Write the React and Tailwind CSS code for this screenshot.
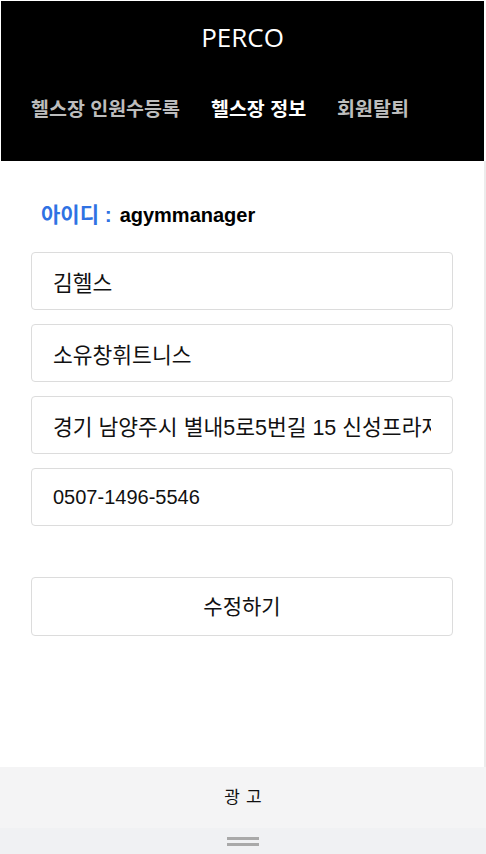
import { useState } from "react";

const font = { fontFamily: '"Liberation Sans", "Noto Sans CJK KR", sans-serif' };

export default function App() {
  const [name, setName] = useState("김헬스");
  const [gym, setGym] = useState("소유창휘트니스");
  const [addr, setAddr] = useState("경기 남양주시 별내5로5번길 15 신성프라자");
  const [tel, setTel] = useState("0507-1496-5546");

  const tabs = ["헬스장 인원수등록", "헬스장 정보", "회원탈퇴"];
  const active = 1;

  const fields = [
    [name, setName, "text-[21.5px]"],
    [gym, setGym, "text-[21.5px]"],
    [addr, setAddr, "text-[21.5px]"],
    [tel, setTel, "text-[20px]"],
  ];

  return (
    <div
      className="h-[854px] w-[486px] flex flex-col bg-white overflow-hidden"
      style={font}
    >
      <header className="h-[160px] mt-[1px] ml-[1px] mr-[2px] bg-black flex flex-col items-center">
        <h1
          className="mt-[18px] text-[26px] leading-[36px] text-white font-normal"
          style={{ fontFamily: '"Open Sans", sans-serif' }}
        >
          PERCO
        </h1>
        <nav className="mt-[41px] self-start pl-[30px] flex gap-[31px]">
          {tabs.map((t, i) => (
            <button
              key={t}
              className={`text-[19.5px] leading-[26px] font-bold ${
                i === active ? "text-white" : "text-[#bdbdbd]"
              }`}
            >
              {t}
            </button>
          ))}
        </nav>
      </header>

      <main className="flex-1 border-r-[2px] border-[#ececec] px-[31px] pt-[41px]">
        <p className="pl-[10px] leading-[26px] font-bold">
          <span className="text-[#2f72e3] text-[21px]">아이디 : </span>
          <span className="text-black text-[20px] pl-[2px]">agymmanager</span>
        </p>

        <div className="mt-[22px] flex flex-col gap-[14px]">
          {fields.map(([v, set, size], i) => (
            <input
              key={i}
              value={v}
              onChange={(e) => set(e.target.value)}
              className={`h-[58px] w-full rounded-[4px] border border-[#dcdcdc] bg-white px-[21px] ${size} text-[#111] outline-none`}
            />
          ))}
        </div>

        <button className="mt-[51px] h-[59px] w-full rounded-[4px] border border-[#dcdcdc] bg-white text-[21px] text-[#111]">
          수정하기
        </button>
      </main>

      <div className="h-[61px] bg-[#f4f4f5] flex items-center justify-center">
        <span className="text-[17px] tracking-[6px] text-[#111] pl-[6px]">광고</span>
      </div>
      <div className="h-[26px] bg-[#f0f1f3] flex flex-col items-center justify-center gap-[3px]">
        <div className="h-[3px] w-[32px] bg-[#a9a9a9]" />
        <div className="h-[3px] w-[32px] bg-[#a9a9a9]" />
      </div>
    </div>
  );
}
